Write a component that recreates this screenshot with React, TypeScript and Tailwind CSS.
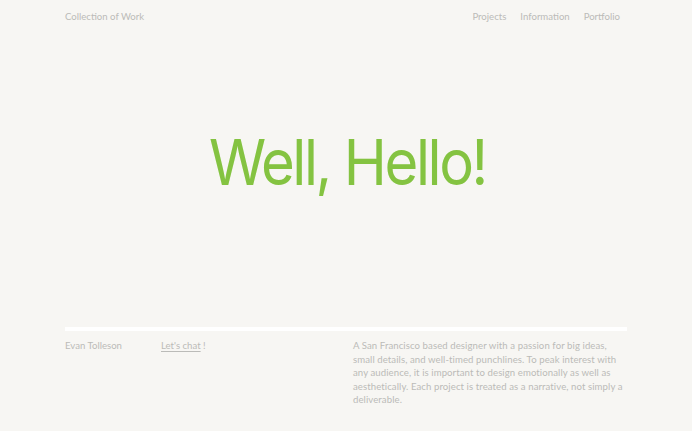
import React from "react";

export default function App() {
  return (
    <div
      className="w-[692px] h-[431px] bg-[#f7f6f3] overflow-hidden flex flex-col"
      style={{ fontFamily: "Lato, 'Liberation Sans', sans-serif" }}
    >
      <header className="flex justify-between items-center px-[65px] pt-[12px] h-[23px] text-[9.6px] text-[#bbbbb8]">
        <span>Collection of Work</span>
        <nav className="flex gap-[14px] mr-[7px]">
          <span>Projects</span>
          <span>Information</span>
          <span>Portfolio</span>
        </nav>
      </header>
      <main className="flex justify-center pt-[116px] h-[304px]">
        <h1
          className="text-[58px] leading-none text-[#84c341] tracking-[-2.4px] pl-[3px] scale-y-[1.1]"
          style={{ fontFamily: "Inter, 'Liberation Sans', sans-serif" }}
        >
          Well, Hello!
        </h1>
      </main>
      <section className="px-[65px]">
        <div className="h-[4px] bg-white w-[562px]" />
        <div className="flex pt-[8px] text-[9.6px] leading-[13.5px] text-[#bbbbb8]">
          <span className="w-[96px] shrink-0">Evan Tolleson</span>
          <span className="w-[192px] shrink-0">
            <span className="underline underline-offset-2">Let's chat</span> !
          </span>
          <p className="w-[274px] shrink-0 whitespace-nowrap tracking-[0.08px]">
            A San Francisco based designer with a passion for big ideas,
            <br />
            small details, and well-timed punchlines. To peak interest with
            <br />
            any audience, it is important to design emotionally as well as
            <br />
            aesthetically. Each project is treated as a narrative, not simply a
            <br />
            deliverable.
          </p>
        </div>
      </section>
    </div>
  );
}
